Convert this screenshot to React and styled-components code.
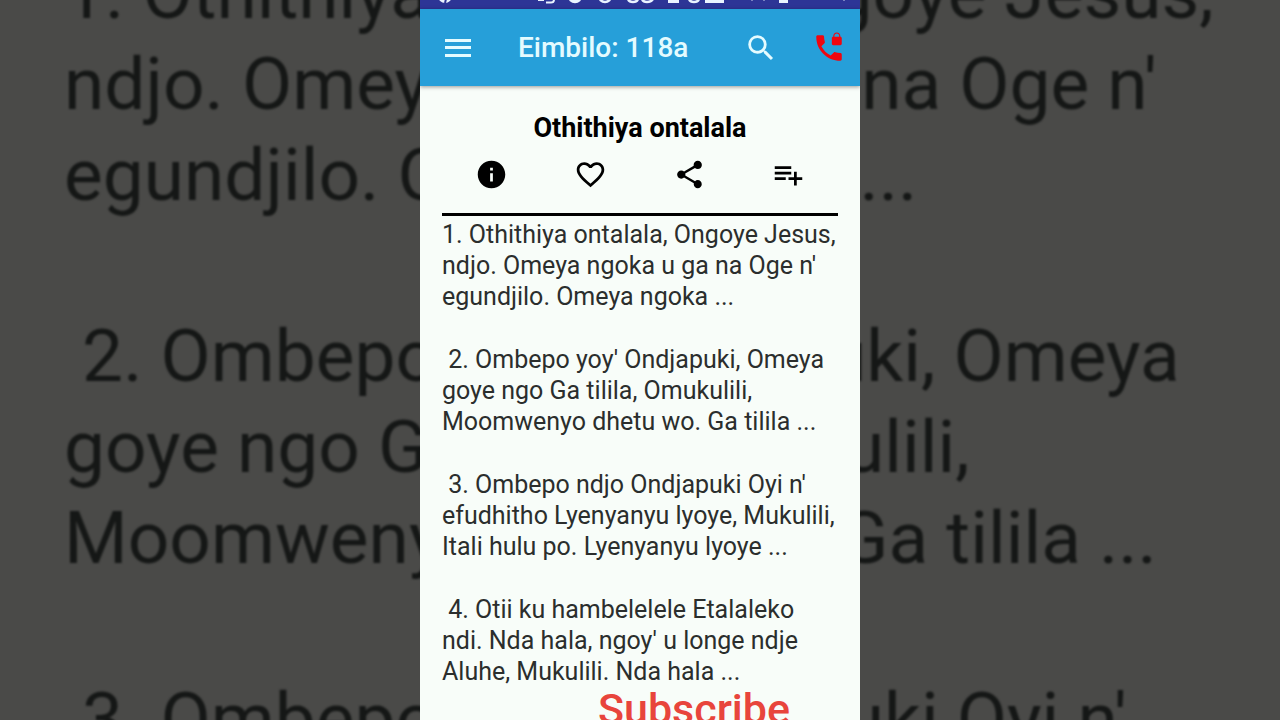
import React from "react";
import styled, { createGlobalStyle } from "styled-components";
import { MdSearch, MdInfo, MdFavoriteBorder, MdShare } from "react-icons/md";

const verses = [
    "1. Othithiya ontalala, Ongoye Jesus,\nndjo. Omeya ngoka u ga na Oge n'\negundjilo. Omeya ngoka ...",
    " 2. Ombepo yoy' Ondjapuki, Omeya\ngoye ngo Ga tilila, Omukulili,\nMoomwenyo dhetu wo. Ga tilila ...",
    " 3. Ombepo ndjo Ondjapuki Oyi n'\nefudhitho Lyenyanyu lyoye, Mukulili,\nItali hulu po. Lyenyanyu lyoye ...",
    " 4. Otii ku hambelelele Etalaleko\nndi. Nda hala, ngoy' u longe ndje\nAluhe, Mukulili. Nda hala ...",
];

const StatusIcons = () => (
    <svg width="440" height="9" viewBox="0 0 440 9" fill="#eaf4ff" aria-hidden="true">
        <circle cx="25" cy="-4" r="7" />
        <path d="M25 3l1-4h3" fill="none" stroke="#2d3596" strokeWidth="2" />
        <path d="M118 0h6v1h-6z" />
        <path d="M126 2.500h5q3 0 3-3" fill="none" stroke="#eaf4ff" strokeWidth="2" />
        <g fill="none" stroke="#eaf4ff" strokeWidth="2.500">
            <circle cx="155" cy="-4" r="6" />
            <circle cx="185" cy="-4" r="6" />
            <path d="M208-1q1 3 5 3t5-3M222-1q1 3 5 3t6-3M269-1q1 3 5 3t5-3" />
        </g>
        <path d="M152 0h6v1h-6zM248 0h11v3h-11zM285 0h19v3h-19zM359 0h9v3h-9z" />
        <path d="M331 0h2v1h-2zM343 0h2v1h-2zM423 0h2v1h-2z" opacity="0.400" />
    </svg>
);

const MenuIcon = () => (
    <svg width="34" height="34" viewBox="0 0 34 34" fill="currentColor" aria-hidden="true">
        <path d="M4 8h26v3H4zM4 15h26v3H4zM4 23h26v3H4z" />
    </svg>
);

const PhoneLocked = () => (
    <svg width="34" height="34" viewBox="0 0 24 24" fill="currentColor" aria-hidden="true">
        <path d="M20 15.500c-1.250 0-2.450-.200-3.570-.570-.350-.110-.740-.030-1.020.240l-2.200 2.200c-2.830-1.440-5.150-3.750-6.590-6.590l2.200-2.200c.280-.270.360-.660.250-1.010C8.700 6.450 8.500 5.250 8.500 4c0-.550-.450-1-1-1H4c-.550 0-1 .450-1 1 0 9.390 7.610 17 17 17 .550 0 1-.450 1-1v-3.500c0-.550-.450-1-1-1zM20 4v-.500C20 2.120 18.880 1 17.500 1S15 2.120 15 3.500V4c-.550 0-1 .450-1 1v4c0 .550.450 1 1 1h5c.550 0 1-.450 1-1V5c0-.550-.450-1-1-1zm-.800 0h-3.400v-.500c0-.940.760-1.700 1.700-1.700s1.700.760 1.700 1.700V4z" />
    </svg>
);

const PlaylistAdd = () => (
    <svg width="33" height="33" viewBox="0 0 24 24" fill="currentColor" aria-hidden="true">
        <path d="M14 10H2v2h12v-2zm0-4H2v2h12V6zm4 8v-4h-2v4h-4v2h4v4h2v-4h4v-2h-4zM2 16h8v-2H2v2z" />
    </svg>
);

const App = () => {
    return (
        <Stage>
            <GlobalStyle />
            <Backdrop aria-hidden="true">
                {verses.slice(0, 3).map((verse) => (
                    <BackdropVerse key={verse}>{verse}</BackdropVerse>
                ))}
            </Backdrop>
            <Phone>
                <StatusBar><StatusIcons /></StatusBar>
                <AppBar>
                    <IconBtn aria-label="Menu"><MenuIcon /></IconBtn>
                    <BarTitle>Eimbilo: 118a</BarTitle>
                    <BarActions>
                        <IconBtn aria-label="Search"><MdSearch size={34} /></IconBtn>
                        <IconBtn $color="#f0060f" aria-label="Locked call"><PhoneLocked /></IconBtn>
                    </BarActions>
                </AppBar>
                <Song>
                    <SongTitle>Othithiya ontalala</SongTitle>
                    <Actions>
                        <IconBtn $color="#000" aria-label="Info"><MdInfo size={33} /></IconBtn>
                        <IconBtn $color="#000" aria-label="Favourite"><MdFavoriteBorder size={33} /></IconBtn>
                        <IconBtn $color="#000" aria-label="Share"><MdShare size={33} /></IconBtn>
                        <IconBtn $color="#000" aria-label="Add to list"><PlaylistAdd /></IconBtn>
                    </Actions>
                    <Lyrics>
                        {verses.map((verse) => (
                            <Verse key={verse}>{verse}</Verse>
                        ))}
                    </Lyrics>
                </Song>
                <Subscribe>Subscribe</Subscribe>
            </Phone>
        </Stage>
    )
}

const GlobalStyle = createGlobalStyle`
    body {
        margin: 0;
        font-family: Roboto, "Liberation Sans", sans-serif;
    }
`;

const Stage = styled.div`
    position: relative;
    display: flex;
    justify-content: center;
    height: 100vh;
    overflow: hidden;
    background: #4a4a48;
`;

const Backdrop = styled.div`
    position: absolute;
    top: -52px;
    left: 50%;
    width: 1152px;
    margin-left: -576px;
    color: #151716;
    filter: blur(1px);
`;

const BackdropVerse = styled.p`
    margin: 0 0 90px;
    font-size: 73px;
    line-height: 91px;
    white-space: pre;
`;

const Phone = styled.main`
    position: relative;
    display: flex;
    flex-direction: column;
    width: 100%;
    max-width: 440px;
    overflow: hidden;
    background: #f8fdf9;
`;

const StatusBar = styled.div`
    display: flex;
    flex-shrink: 0;
    height: 9px;
    background: #2d3596;
`;

const AppBar = styled.header`
    display: flex;
    flex-shrink: 0;
    align-items: center;
    height: 77px;
    padding: 0 14px 0 21px;
    background: #269fd9;
    box-shadow: 0 1px 4px rgba(0, 0, 0, 0.4);
`;

const BarActions = styled.div`
    display: flex;
    gap: 34px;
`;

const IconBtn = styled.button`
    display: flex;
    align-items: center;
    justify-content: center;
    padding: 0;
    border: none;
    background: none;
    color: ${(props) => props.$color || "#e4fbff"};
`;

const BarTitle = styled.h1`
    flex: 1;
    margin: 0 0 0 43px;
    color: #e4fbff;
    font-size: 28px;
    font-weight: 500;
    line-height: 32px;
`;

const Song = styled.section`
    padding: 0 22px;
`;

const SongTitle = styled.h2`
    margin: 26px 0 0;
    color: #000;
    font-size: 27px;
    font-weight: 700;
    line-height: 32px;
    text-align: center;
`;

const Actions = styled.div`
    display: grid;
    grid-template-columns: repeat(4, 1fr);
    align-items: center;
    padding: 14px 0 22px;
    border-bottom: 3px solid #000;
`;

const Lyrics = styled.div`
    display: grid;
    gap: 32px;
    padding-top: 3px;
`;

const Verse = styled.p`
    margin: 0;
    color: #2b2e2d;
    font-size: 25px;
    line-height: 31px;
    white-space: pre;
`;

const Subscribe = styled.a.attrs({ href: "#subscribe" })`
    align-self: flex-end;
    margin-right: 70px;
    color: #e8453c;
    font-size: 43px;
    font-weight: 500;
    line-height: 44px;
    text-decoration: none;
`;

export default App;
